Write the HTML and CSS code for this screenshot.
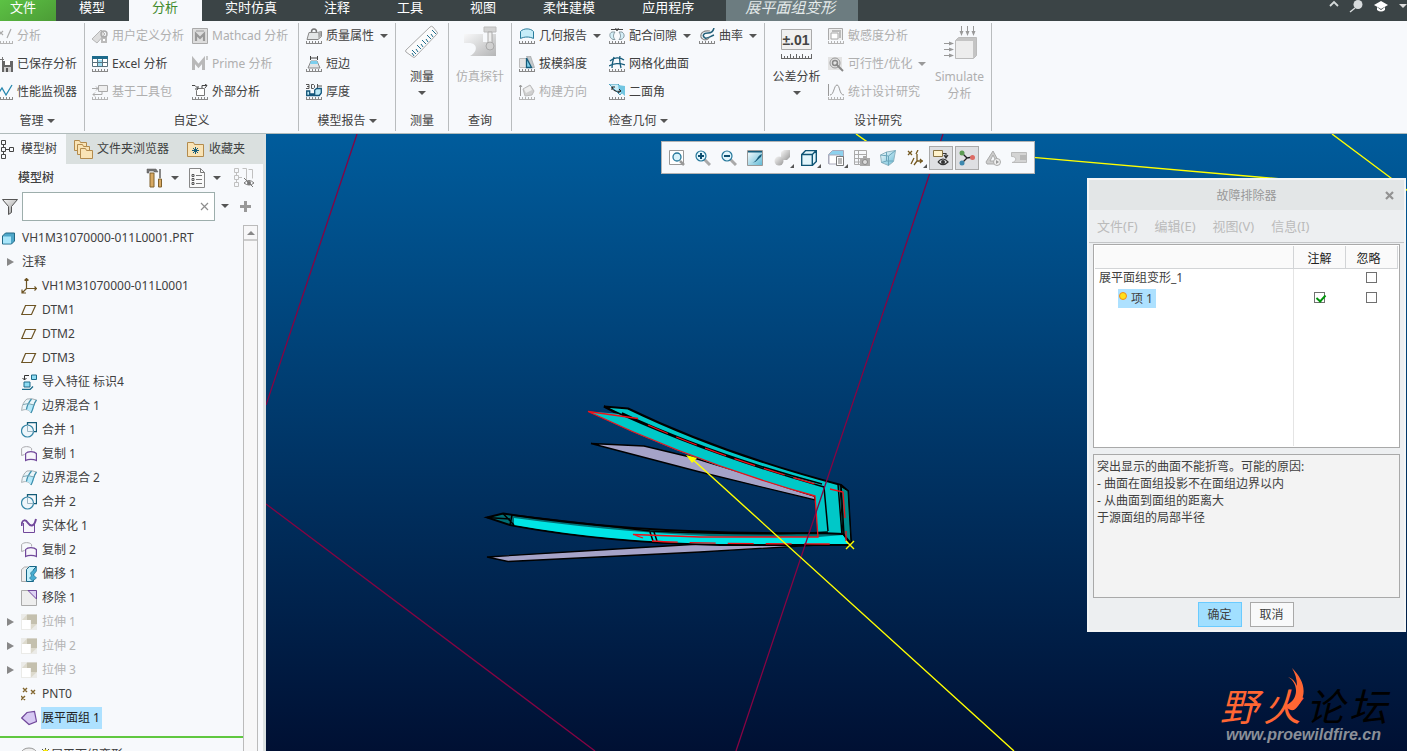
FILE: index.html
```html
<!DOCTYPE html>
<html lang="zh-CN">
  <head>
    <meta charset="UTF-8" />
    <meta name="viewport" content="width=device-width, initial-scale=1.0" />
    <title>展平面组变形</title>
    <link rel="stylesheet" href="styles.css">
  </head>
  <body>
    <!-- shared icons -->
    <svg class="sprite" aria-hidden="true">
      <linearGradient id="metal" x1="0" y1="0" x2="1" y2="1">
        <stop offset="0" stop-color="#f8f8f8" />
        <stop offset="1" stop-color="#989898" />
      </linearGradient>
      <linearGradient id="ice" x1="0" y1="0" x2="1" y2="1">
        <stop offset="0" stop-color="#ffffff" />
        <stop offset="1" stop-color="#5eb9d6" />
      </linearGradient>
      <symbol id="scale" viewBox="0 0 16 16">
        <path d="M0 15.5h16M.5 13v2M3.5 13v2M6.5 13v2M9.5 13v2M12.5 13v2M15.5 13v2" fill="none" stroke="currentColor" />
      </symbol>
      <symbol id="plane" viewBox="0 0 16 16">
        <path d="M4.5 3.5h10l-4 9H.8z" fill="none" stroke="#6d5424" stroke-width="1.2" />
      </symbol>
      <symbol id="blend" viewBox="0 0 16 16">
        <path d="M.6 12.5C1 7 3 3 6 1q5-1 9.500 1C12 6 13 10 10 15 8 11 4 11 .6 12.500z" fill="#eaf5f9" stroke="#a8b0b4" />
        <path d="M8 6.500l5.500.5C12.500 10 12 13 10 15 9 13 7.500 12 5.500 11.700 6 9.500 7 8 8 6.500z" fill="#b5e9fa" />
        <path d="M15.500 2C12 6 13 10 10 15M5.500 11.500C6 7 8 4 10.500 1" fill="none" stroke="#3b8fad" stroke-width="1.200" />
        <path d="M2 6.500q5-2 11 .5" fill="none" stroke="#7aa5b3" />
      </symbol>
      <symbol id="merge" viewBox="0 0 16 16">
        <path d="M6.500 5V.7h9v9H12" fill="none" stroke="#145c78" stroke-width="1.3" />
        <circle cx="6.500" cy="9" r="6" fill="#eef6fb" stroke="#3486a7" stroke-width="1.2" />
        <path d="M6.500 3v6.500h6" fill="none" stroke="#9ab4c2" />
      </symbol>
      <symbol id="copy" viewBox="0 0 16 16">
        <path d="M.6 9.500V2.500c2-2.500 8-2.500 10 0v2M.6 9.500l3-1" fill="none" stroke="#a9a9ad" />
        <path d="M4.600 14.500V7.500c2-2.600 8.500-2.600 10.800 0v7c-3-1.600-8-1.600-10.800 0z" fill="#f7f5fb" stroke="#71489b" stroke-width="1.2" />
      </symbol>
      <symbol id="extrude" viewBox="0 0 16 16">
        <path d="M0 0h16v16H0z" fill="#ebebe8" />
        <path d="M6 .5h10V10h-6V6H6z" fill="#c4c0ae" />
        <path d="M1 6l5-5.500V6zM10 15.500V10h6z" fill="#dddacd" />
        <path d="M1 6h8.500v9H1z" fill="#fff" />
      </symbol>
    </svg>

    <nav class="tabs">
      <button class="tab file">文件</button>
      <button class="tab">模型</button>
      <button class="tab active">分析</button>
      <button class="tab">实时仿真</button>
      <button class="tab">注释</button>
      <button class="tab">工具</button>
      <button class="tab">视图</button>
      <button class="tab">柔性建模</button>
      <button class="tab">应用程序</button>
      <button class="tab context">展平面组变形</button>
      <div class="window-tools">
        <svg width="12" height="12" viewBox="0 0 12 12"><path d="M2 6l4-4 4 4" fill="none" stroke="#d5dada" stroke-width="1.800" /></svg>
        <svg width="16" height="14" viewBox="0 0 16 14"><circle cx="9" cy="4.500" r="4.500" fill="#d8dcdd" /><path d="M6 8l-5 4" stroke="#d8dcdd" stroke-width="1.500" /></svg>
        <svg width="16" height="14" viewBox="0 0 16 14"><path d="M0 5l7-4 7 4-7 4z" fill="#fff" /><path d="M3 7v3q4 3 8 0V7L7 10z" fill="#fff" /></svg>
        <i class="caret light"></i>
      </div>
    </nav>

    <header class="ribbon">
      <section class="group manage">
        <div class="cmds">
          <button class="cmd" disabled><svg class="icon" viewBox="0 0 16 16"><use href="#scale" /><path d="M2 3l4 4M6 3L2 7M14 1l-4 9" stroke="#aaa" stroke-width="1.200" /></svg>分析</button>
          <button class="cmd"><svg class="icon" viewBox="0 0 16 16"><path d="M0 3.500h7M2.500 1v6M5.500 1v4" stroke="#777" fill="none" /><path d="M5 5h11v11H5z" fill="#666" /><path d="M8 5h5v4H8z" fill="#fff" /><path d="M7 11h7v5H7z" fill="#ccc" /><path d="M9 12h2v4H9z" fill="#555" /></svg>已保存分析</button>
          <button class="cmd"><svg class="icon" viewBox="0 0 16 16"><use href="#scale" /><path d="M1 10l4-6 4 7 6-10" fill="none" stroke="#2586ae" stroke-width="1.300" /></svg>性能监视器</button>
        </div>
        <button class="label">管理<i class="caret"></i></button>
      </section>

      <section class="group custom">
        <div class="cmds">
          <button class="cmd" disabled><svg class="icon" viewBox="0 0 16 16"><path d="M0 11L9 2l4 4-8 9z" fill="#ddd" stroke="#b5b5b5" /><path d="M9 8h6v7H9z" fill="#bbb" /><circle cx="12" cy="6" r="3" fill="none" stroke="#aaa" stroke-width="1.500" /><path d="M11 11h2v2h-2z" fill="#fff" /></svg>用户定义分析</button>
          <button class="cmd" disabled><svg class="icon" viewBox="0 0 16 16"><path d="M.5.500h15v15H.5z" fill="#ddd" stroke="#aaa" /><path d="M4 13V6l4 4 4-4v7" fill="none" stroke="#999" stroke-width="2.200" /><path d="M4 3h8" stroke="#bbb" stroke-width="2" /></svg>Mathcad 分析</button>
          <button class="cmd"><svg class="icon" viewBox="0 0 16 16"><use href="#scale" /><path d="M.5.500h15v10H.5z" fill="#fff" stroke="#59727e" /><path d="M0 0h16v3H0z" fill="#1d6b8c" /><path d="M6 4h5v6H6z" fill="#9fdcf0" /><path d="M0 6.500h16M5.500 3v8M10.500 3v8" stroke="#59727e" /></svg>Excel 分析</button>
          <button class="cmd" disabled><svg class="icon" viewBox="0 0 16 16"><path d="M1.500 14V4L6.500 10l5-6v10" fill="none" stroke="#b9b9b9" stroke-width="3" /><path d="M15 0v4" stroke="#b9b9b9" stroke-width="1.500" /></svg>Prime 分析</button>
          <button class="cmd" disabled><svg class="icon" viewBox="0 0 16 16"><use href="#scale" /><path d="M6.500 1.500h9v6h-9z" fill="#eee" stroke="#aaa" /><path d="M0 4.500h6M4 2.500l2 2-2 2M10 8v2.500H1M3 8.500l-2 2 2 2" fill="none" stroke="#aaa" /></svg>基于工具包</button>
          <button class="cmd"><svg class="icon" viewBox="0 0 16 16"><use href="#scale" /><path d="M4.500 6.500l2-2h6v7h-8z" fill="#fff" stroke="#777" /><path d="M0 1.500h3l3 3M6 2v3H3M10 4V1.500h5M13 0l2 1.500L13 4" fill="none" stroke="#444" /></svg>外部分析</button>
        </div>
        <span class="label">自定义</span>
      </section>

      <section class="group report">
        <div class="cmds">
          <button class="cmd"><svg class="icon" viewBox="0 0 16 16"><use href="#scale" /><path d="M1 11.500L3 4.500h8.500l4-1v5l-3.500 3z" fill="#e4e6e7" stroke="#888" /><path d="M12 5l3-1v4l-2.500 3z" fill="#aaa" /><path d="M5.500 4c0-4 5-4 5 0" fill="none" stroke="#777" stroke-width="1.500" /></svg>质量属性<i class="caret"></i></button>
          <button class="cmd"><svg class="icon" viewBox="0 0 16 16"><use href="#scale" /><path d="M4.500 2h7M4.500 0v4M11.500 0v4" stroke="#444" /><path d="M5 5h6l3 7H2z" fill="#e2e5e7" stroke="#888" /><path d="M5 5h6l1 3H4z" fill="#7ccfee" /></svg>短边</button>
          <button class="cmd"><svg class="icon" viewBox="0 0 16 16"><use href="#scale" /><path d="M.7 7h3v3h5V6l2-1.500h4.600V9l-2 2.500H.7z" fill="#bce8f5" stroke="#14567a" stroke-width="1.300" /><path d="M0 .5h3v4H0M1 2.500h2M5.500.500v4h2l1-1V1.500l-1-1zM11.500 0v4M12 2h4" fill="none" stroke="#444" stroke-width=".9" /></svg>厚度</button>
        </div>
        <button class="label">模型报告<i class="caret"></i></button>
      </section>

      <section class="group measure">
        <button class="big">
          <svg width="36" height="36" viewBox="0 0 36 36"><path d="M2 25L26 2q1.500-1.500 3 0l4 5q1 1 0 2L11 32q-1 1-2 0l-7-5q-1-1 0-2z" fill="#fbfbfb" stroke="#aaa" /><path d="M10 31l-2-3M12 29l-4-4M14 27l-2-3M17 24l-4-4M19 22l-2-3M22 19l-4-4M24 17l-2-3M27 14l-4-4M29 12l-2-3M32 9l-4-4" stroke="#1d6b8c" /></svg>
          <span>测量</span><i class="caret"></i>
        </button>
        <span class="label">测量</span>
      </section>

      <section class="group query">
        <button class="big" disabled>
          <svg width="36" height="36" viewBox="0 0 36 36"><path d="M2 9h19v8h5V9h8v22H8c8-4 8-13-1-13H2z" fill="url(#metal)" opacity=".7" /><path d="M22 2h12v5H22z" fill="#d2d2d2" stroke="#bbb" /><path d="M26 7h4v11h-4z" fill="#eee" stroke="#aaa" /><circle cx="28" cy="21" r="4" fill="#d0d0d0" stroke="#aaa" /></svg>
          <span>仿真探针</span>
        </button>
        <span class="label">查询</span>
      </section>

      <section class="group geometry">
        <div class="cmds">
          <button class="cmd"><svg class="icon" viewBox="0 0 16 16"><use href="#scale" /><path d="M1.500 10.500v-7c3-3.500 10-3.500 13 0v7c-4-2-9-2-13 0z" fill="#c5ecf8" stroke="#2a7c9c" /></svg>几何报告<i class="caret"></i></button>
          <button class="cmd"><svg class="icon" viewBox="0 0 16 16"><use href="#scale" /><path d="M6 4H3C0 5 0 10 4 11.500h2c-2-2-2-5 0-7.500zM10 4h3c3 2 3 6-1 7.500h-2c2-2 2-5 0-7.500z" fill="#d4eff8" stroke="#889ba3" /><path d="M2 1.500h12M6.500 0l2 3M9.500 0l-2 3" stroke="#444" /></svg>配合间隙<i class="caret"></i></button>
          <button class="cmd"><svg class="icon" viewBox="0 0 16 16"><use href="#scale" /><path d="M15 0c-1 4-3 5-6 5-5 0-6 3-3 5 3 1 6-2 9-3" fill="none" stroke="#225f79" stroke-width="1.500" /><path d="M11 3c-6-1-10 2-9 6 1 3 5 4 8 1" fill="none" stroke="#888" stroke-width="1.200" /></svg>曲率<i class="caret"></i></button>
          <button class="cmd"><svg class="icon" viewBox="0 0 16 16"><use href="#scale" /><path d="M.5 2.500h7v9h-7z" fill="#e4e4e4" stroke="#bbb" /><path d="M7.500 0h4l4 11.500h-3z" fill="#c3c9cc" stroke="#999" stroke-width=".6" /><path d="M7.500 2v9.500h5z" fill="#82d2ed" stroke="#155b7a" stroke-width="1.300" /></svg>拔模斜度</button>
          <button class="cmd wide"><svg class="icon" viewBox="0 0 16 16"><use href="#scale" /><path d="M1 5c4-4 10-4 14-1M0 10c4-3 11-3 16-1M5 1c-1 3-2 7-2 11M11 0c-1 4 0 8 1 12" fill="none" stroke="#155b7a" stroke-width="1.300" /></svg>网格化曲面</button>
          <button class="cmd" disabled><svg class="icon" viewBox="0 0 16 16"><use href="#scale" /><path d="M1.500 12V1M0 3l1.500-2L3 3" fill="none" stroke="#999" /><path d="M4 5l7-4 4 6-2 4-7 1z" fill="#d0d0d0" stroke="#bbb" /><path d="M5 5l6-3 2 4-6 3z" fill="#eee" /></svg>构建方向</button>
          <button class="cmd wide"><svg class="icon" viewBox="0 0 16 16"><use href="#scale" /><path d="M0 0h9l6 6-4 5z" fill="#ccedf7" stroke="#47a0bf" /><path d="M9 1l7 1v10l-6-5z" fill="#72c6e2" /><path d="M3 3c1 4 4 5 9 4M3 6V3h3M10 5l2 2-3 2" fill="none" stroke="#222" /></svg>二面角</button>
        </div>
        <button class="label">检查几何<i class="caret"></i></button>
      </section>

      <section class="group study">
        <div class="study-body">
          <button class="big">
            <svg width="36" height="36" viewBox="0 0 36 36"><path d="M2.500 4.500h30v20h-30z" fill="#f0f0f0" stroke="#aaa" /><text x="17" y="20" class="tol">±.01</text><path d="M2 33.500h31M2.500 29v4M5.500 31v2M8.500 31v2M11.500 29v4M14.500 31v2M17.500 29v4M20.500 31v2M23.500 29v4M26.500 31v2M29.500 31v2M32.500 29v4" stroke="#666" fill="none" /></svg>
            <span>公差分析</span><i class="caret"></i>
          </button>
          <div class="cmds">
            <button class="cmd" disabled><svg class="icon" viewBox="0 0 16 16"><use href="#scale" /><path d="M.5 12V.500h14V12" fill="#eee" stroke="#aaa" /><path d="M3 5h7v6H3z" fill="#fff" stroke="#aaa" /><path d="M4 3h8v7" fill="none" stroke="#bbb" stroke-width="2" /></svg>敏感度分析</button>
            <button class="cmd" disabled><svg class="icon" viewBox="0 0 16 16"><path d="M0 1h14v13H0z" fill="#e3e3e3" /><circle cx="7" cy="7" r="5" fill="none" stroke="#999" /><circle cx="7" cy="7" r="2.500" fill="none" stroke="#888" stroke-width="1.500" /><path d="M8 8l7 7" stroke="#888" stroke-width="2" /></svg>可行性/优化<i class="caret"></i></button>
            <button class="cmd" disabled><svg class="icon" viewBox="0 0 16 16"><use href="#scale" /><path d="M.5 0v12M2 11c4 0 4-10 7-10s2 10 7 10" fill="none" stroke="#999" /></svg>统计设计研究</button>
          </div>
          <button class="big" disabled>
            <svg width="36" height="36" viewBox="0 0 36 36"><path d="M13.500 15.500l3-3h18v18l-3 3h-18z" fill="#c4c4c4" stroke="#bbb" /><path d="M14 16h17v17H14z" fill="#ededed" /><path d="M19.500 1v9M25.500 1v9M31.500 1v9M2 18.500h9M2 24.500h9M2 30.500h9" stroke="#999" /><path d="M17.500 6h4l-2 5zM23.500 6h4l-2 5zM29.500 6h4l-2 5zM7 16.500v4l5-2zM7 22.500v4l5-2zM7 28.500v4l5-2z" fill="#999" /></svg>
            <span>Simulate<br>分析</span>
          </button>
        </div>
        <span class="label">设计研究</span>
      </section>
    </header>

    <main class="workspace">
      <aside class="sidebar">
        <div class="side-tabs">
          <button class="side-tab active"><svg width="15" height="20" viewBox="0 0 15 20"><path d="M1.500 1.500h4v4h-4zM1.500 8.500h4v4h-4zM1.500 15.500h4v4h-4zM9.500 8.500h4v4h-4zM3.500 6v2M3.500 13v2M6 10.500h3" fill="none" stroke="#444" /></svg>模型树</button>
          <button class="side-tab"><svg width="19" height="20" viewBox="0 0 19 20"><g fill="#f9e3b5" stroke="#b38b4d"><path d="M.5 1.500h5l1 2h6v8H.5z" /><path d="M3.500 5.500h5l1 2h6v8h-12z" /><path d="M6.500 9.500h5l1 2h6v8h-12z" /></g></svg>文件夹浏览器</button>
          <button class="side-tab fav"><svg width="17" height="16" viewBox="0 0 17 16"><path d="M.5 1.500h6l1 2h9v12H.5z" fill="#f9e3b5" stroke="#b38b4d" /><path d="M8.500 6v7M5 9.500h7M6 7l5 5M11 7l-5 5" stroke="#155b7a" /></svg>收藏夹</button>
        </div>
        <div class="side-main">
          <div class="tree-head">
            <h2>模型树</h2>
            <button class="tool" aria-label="设置"><svg width="18" height="20" viewBox="0 0 18 20"><path d="M1 1h9l2 3H8V3H3v2H1z" fill="#777" stroke="#555" stroke-width=".5" /><path d="M4 5h4v14H4z" fill="#d8a963" stroke="#80622e" /><path d="M14 1v9" stroke="#888" stroke-width="2" /><path d="M12.500 11h3v8h-3z" fill="#d8a963" stroke="#80622e" /></svg><i class="caret"></i></button>
            <button class="tool" aria-label="显示"><svg width="17" height="20" viewBox="0 0 17 20"><path d="M.5.500h11l4 4v15H.5z" fill="#fafafa" stroke="#888" /><path d="M11.500.500v4h4M7 7.500h6M7 11.500h6M7 15.500h6" fill="none" stroke="#777" /><path d="M3 6.500h2v2H3zM3 10.500h2v2H3zM3 14.500h2v2H3z" fill="none" stroke="#555" /></svg><i class="caret"></i></button>
            <button class="tool" aria-label="隐藏"><svg width="20" height="20" viewBox="0 0 20 20"><path d="M.5.500h4v4h-4zM.5 7.500h4v4h-4zM.5 14.500h4v4h-4zM2.500 5v2M2.500 12v2M5 9.500h3M8.500.500h4v12M14.500 1.500h4v9" fill="none" stroke="#c0c0c0" /><path d="M10 15q5-5 10 0-5 4-10 0" fill="none" stroke="#777" /><circle cx="15" cy="15" r="2" fill="#777" /><path d="M10 10l9 9" stroke="#777" /></svg></button>
          </div>
          <div class="filter">
            <svg width="17" height="17" viewBox="0 0 17 17"><path d="M1.500 1.500h15l-6 7v6l-3 2v-8z" fill="url(#metal)" stroke="#555" /></svg>
            <div class="search"><input type="text" aria-label="过滤"><button aria-label="清除"><svg width="9" height="9" viewBox="0 0 9 9"><path d="M1 1l7 7M8 1L1 8" stroke="#8d8d8d" stroke-width="1.200" /></svg></button></div>
            <button class="tool" aria-label="选项"><i class="caret"></i></button>
            <button class="tool" aria-label="添加"><svg width="11" height="11" viewBox="0 0 11 11"><path d="M5.500 0v11M0 5.500h11" stroke="#999" stroke-width="3" /></svg></button>
          </div>
          <div class="tree-wrap">
            <ul class="tree">
              <li class="top"><svg class="icon" viewBox="0 0 16 16"><path d="M1.500 6l3-3h9v8l-3 3h-9z" fill="#4ea7c9" stroke="#236985" /><path d="M2 6.500h8v7H2z" fill="#a9e6fa" /></svg><span>VH1M31070000-011L0001.PRT</span></li>
              <li class="top"><i class="toggle"></i><span>注释</span></li>
              <li><svg class="icon" viewBox="0 0 16 16"><path d="M5.500 0v10.500H16M5.500 10.500L1 15M3.500 2.500l2-2 2 2M13.500 8.500l2 2-2 2M1 11.500V15h4" fill="none" stroke="#6d5424" stroke-width="1.200" /></svg><span>VH1M31070000-011L0001</span></li>
              <li><svg class="icon"><use href="#plane" /></svg><span>DTM1</span></li>
              <li><svg class="icon"><use href="#plane" /></svg><span>DTM2</span></li>
              <li><svg class="icon"><use href="#plane" /></svg><span>DTM3</span></li>
              <li><svg class="icon" viewBox="0 0 16 16"><path d="M10.500 1h5v4.500h-5zM3 8h6v5H3z" fill="#8fdcf3" stroke="#1c6b8a" /><path d="M1 15.500h8l3-3" fill="none" stroke="#1c6b8a" stroke-width="1.300" /><path d="M8 1.500H3.500V6M1.500 4l2 2 2-2" fill="none" stroke="#333" /></svg><span>导入特征 标识4</span></li>
              <li><svg class="icon"><use href="#blend" /></svg><span>边界混合 1</span></li>
              <li><svg class="icon"><use href="#merge" /></svg><span>合并 1</span></li>
              <li><svg class="icon"><use href="#copy" /></svg><span>复制 1</span></li>
              <li><svg class="icon"><use href="#blend" /></svg><span>边界混合 2</span></li>
              <li><svg class="icon"><use href="#merge" /></svg><span>合并 2</span></li>
              <li><svg class="icon" viewBox="0 0 16 16"><path d="M2.500 5v9.500h11V5" fill="#f7f5fb" stroke="#71489b" /><path d="M.5 8C1 0 5 2 7 5s6 5 8-4" fill="none" stroke="#71489b" stroke-width="2" /></svg><span>实体化 1</span></li>
              <li><svg class="icon"><use href="#copy" /></svg><span>复制 2</span></li>
              <li><svg class="icon" viewBox="0 0 16 16"><path d="M.5 3.500l3-2.500h5l-3 2.500v12h-5z" fill="#eee" stroke="#aaa" /><path d="M5.500 3.500l3-3h7l-3 3v12h-7z" fill="#c4f0fb" stroke="#176687" /><path d="M15.500 1l-6 6 1 3-2 2 3 3 4-3-3-3 3-4z" fill="#48acd0" stroke="#176687" stroke-width=".6" /></svg><span>偏移 1</span></li>
              <li><svg class="icon" viewBox="0 0 16 16"><path d="M.5.500h15v15H.5z" fill="#eee" stroke="#aaa" /><path d="M7 .5h8.500V9z" fill="#ddd2f3" stroke="#71489b" /></svg><span>移除 1</span></li>
              <li class="suppressed"><i class="toggle"></i><svg class="icon"><use href="#extrude" /></svg><span>拉伸 1</span></li>
              <li class="suppressed"><i class="toggle"></i><svg class="icon"><use href="#extrude" /></svg><span>拉伸 2</span></li>
              <li class="suppressed"><i class="toggle"></i><svg class="icon"><use href="#extrude" /></svg><span>拉伸 3</span></li>
              <li><svg class="icon" viewBox="0 0 16 16"><path d="M2 2l4 4M6 2L2 6M10 4l4 4M14 4l-4 4M0 10l4 4M4 10l-4 4" stroke="#80642c" stroke-width="1.400" /></svg><span>PNT0</span></li>
              <li class="selected"><svg class="icon" viewBox="0 0 16 16"><path d="M.7 8L6 2.500l7.500-1 2 10L8 14.500z" fill="#d7c9f3" stroke="#71489b" stroke-width="1.200" /></svg><span>展平面组 1</span></li>
              <li class="insert-line"></li>
              <li><svg class="icon" viewBox="0 0 16 16"><ellipse cx="8" cy="6" rx="7.500" ry="5" fill="#eee" stroke="#999" /></svg><svg class="new" viewBox="0 0 9 14"><path d="M4.500 0v9M0 4.500h9M1 1l7 7M8 1L1 8" stroke="#222" stroke-width=".8" /><circle cx="4.500" cy="4.500" r="3" fill="#ffee00" /></svg><span>展平面组变形</span></li>
            </ul>
            <div class="scrollbar"><button aria-label="向上"></button></div>
          </div>
        </div>
      </aside>

      <section class="canvas">
        <svg class="scene" viewBox="266 134 1141 617" preserveAspectRatio="xMinYMin slice">
          <g stroke="#000" stroke-width="1.300">
            <path d="M591 443.500L644 446 690 457 815 495V500L700 472z" fill="#a5a3c8" />
            <path d="M487 557L600 550 700 544H835L700 552 508 561.500z" fill="#a5a3c8" />
            <path d="M604 406.500L628 408.500Q720 453 841 485L848 491 851 543 826 536 815 496Q700 462 622 416z" fill="#00c8c8" stroke-width="2" />
          </g>
          <path d="M588 411.500L622 414Q720 456 825 486L828 532 818 537 815 496Q700 465 588 411.500z" fill="#00c8c8" />
          <path d="M840 486L848 491 851 543 843 535z" fill="#008f8f" stroke="#000" />
          <path d="M487 517.500L503 513.500Q640 535 820 533L843 534 850 545H720Q600 542 510 525z" fill="#006f75" stroke="#000" stroke-width="2" />
          <path d="M514 518Q640 535 740 537H818L843 535 849 544H720Q610 542 514 525z" fill="#00e5e5" />
          <g fill="none" stroke="#000" stroke-width="1.500">
            <path d="M604 406.500Q700 452 824 487L828 531M622 413Q710 454 822 484" />
            <path d="M838 484L842 535M841 485L844 535M828 532Q760 536 650 531L512 515" />
            <path d="M487 517.500L510 519M503 513.500L514 525M512 515L510 525M650 532L653 541M654 532L657 541M843 534L851 543" />
          </g>
          <g fill="none" stroke="#f01018" stroke-width="1.300">
            <path d="M588 411.500Q700 464 815 496L818 537H700L633 534.500 643 538M588 411.500L638 418.500" />
            <path d="M648 425Q720 457 822 486" stroke-dasharray="22 9" />
            <path d="M652 541Q700 544 836 544" stroke-dasharray="26 12" />
            <path d="M830 489L843 492 845 518M846 531V541" />
          </g>
          <path d="M357 134L266 405M943 134L736 751M266 504L595 751" fill="none" stroke="#850443" stroke-width="1.300" />
          <path d="M856 134L869 143 1407 190M1332 134L1407 190M690 457L1014 751M846 541L854 549M854 541L846 549" fill="none" stroke="#ffff00" stroke-width="1.400" />
          <path d="M686 455L697 458 692 463z" fill="#ffff00" />
        </svg>

        <div class="view-bar">
          <button aria-label="重新调整"><svg class="icon" viewBox="0 0 16 16"><path d="M.5.500h14v14H.5z" fill="#fff" stroke="#999" /><path d="M11 11l4 4" stroke="#999" stroke-width="2.500" /><circle cx="8" cy="7" r="4" fill="#d8f2fa" stroke="#25779a" stroke-width="1.300" /></svg></button>
          <button aria-label="放大"><svg class="icon" viewBox="0 0 16 16"><path d="M9 9l6 6" stroke="#a9a9a9" stroke-width="3" /><circle cx="6" cy="6" r="5" fill="#e2f6fd" stroke="#25779a" stroke-width="1.200" /><path d="M6 3v6M3 6h6" stroke="#0d4e70" stroke-width="2" /></svg></button>
          <button aria-label="缩小"><svg class="icon" viewBox="0 0 16 16"><path d="M9 9l6 6" stroke="#a9a9a9" stroke-width="3" /><circle cx="6" cy="6" r="5" fill="#e2f6fd" stroke="#25779a" stroke-width="1.200" /><path d="M3 6h6" stroke="#0d4e70" stroke-width="2" /></svg></button>
          <button aria-label="重画"><svg class="icon" viewBox="0 0 16 16"><path d="M.5.500h15v15H.5z" fill="url(#ice)" stroke="#999" /><path d="M4 13c5 0 6-6 9-8l2-1-1 3c-3 2-5 6-10 6z" fill="#155b7a" /><path d="M1 1h14v1.500H1z" fill="#155b7a" /></svg></button>
          <button class="menu" aria-label="渲染"><svg class="icon" viewBox="0 0 16 16"><path d="M7 2l3-2h6v7l-3 3H7z" fill="url(#metal)" /><circle cx="5" cy="11" r="4.500" fill="url(#metal)" /></svg></button>
          <button class="menu" aria-label="显示样式"><svg class="icon" viewBox="0 0 16 16"><path d="M.7 4.500l4-4h10.600v11l-4 4H.7zM.7 4.500h10.600v11M11.300 4.500l4-4" fill="#e2f5fb" stroke="#0e5474" stroke-width="1.400" /></svg></button>
          <button class="menu" aria-label="已保存方向"><svg class="icon" viewBox="0 0 16 16"><path d="M.5 4.500l4-4h11v10l-3 3H.5z" fill="#8ed1ed" stroke="#aab" /><path d="M1 5h11v9H1z" fill="#fff" stroke="#aab" /><path d="M8.500 6.500h7v9h-7z" fill="#fff" stroke="#777" /><path d="M10 9h4M10 11h4M10 13h4" stroke="#777" /></svg></button>
          <button aria-label="视图管理器" disabled><svg class="icon" viewBox="0 0 16 16"><path d="M.5.500h12v14H.5zM0 4.500h13M0 8.500h8M0 12h7M4.500 1v13" fill="none" stroke="#aaa" /><path d="M6 8h10v8H6z" fill="#aaa" /><path d="M9 6h4v2H9z" fill="#aaa" /><circle cx="11" cy="12" r="2.500" fill="#ddd" stroke="#888" /></svg></button>
          <button aria-label="透视图"><svg class="icon" viewBox="0 0 16 16"><path d="M.5 5l6-3 9-1.500-2 11-5 4-7-3z" fill="url(#ice)" stroke="#90b3bf" /><path d="M.5 5l8 1 7-5.500M8.500 6v9.500M6.500 2v9l-5 1.500M6.500 11h7" stroke="#6aa6bb" fill="none" /></svg></button>
          <button class="menu" aria-label="基准显示"><svg class="icon" viewBox="0 0 16 16"><path d="M1 1l4 4M5 1L1 5M11 0L9 4M7 8l-3 6M10 4v7h6M10 11l-3 4M13 9l2 2-2 2" fill="none" stroke="#755920" stroke-width="1.300" /></svg></button>
          <button class="pressed" aria-label="注释显示"><svg class="icon" viewBox="0 0 16 16"><path d="M.5.500h9v6h-9z" fill="#fff3cc" stroke="#887445" /><path d="M10 3.500h3V8M11 5l2 3 2-3M5 12q5-6 10 0-5 5-10 0" fill="none" stroke="#333" stroke-width="1.200" /><circle cx="10" cy="12" r="2" fill="#333" /></svg></button>
          <button class="pressed" aria-label="旋转中心"><svg class="icon" viewBox="0 0 16 16"><path d="M3 3l5 5 6-1M8 8l-5 5" stroke="#222" fill="none" stroke-width="1.300" /><circle cx="3" cy="3" r="2.500" fill="#5b9a52" /><circle cx="13.500" cy="7.500" r="2.500" fill="#dd6b64" /><circle cx="3" cy="13" r="2.500" fill="#3d88ae" /></svg></button>
          <button aria-label="动画" disabled><svg class="icon" viewBox="0 0 16 16"><path d="M8 1l6 11-2 2H2L1 12z" fill="#ccc" stroke="#aaa" /><path d="M8 5l3 6H5z" fill="#f7f9fc" stroke="#aaa" /><circle cx="12" cy="12" r="3.500" fill="#eee" stroke="#aaa" /><path d="M11 10v4l3-2z" fill="#999" /></svg></button>
          <button aria-label="仿真" disabled><svg class="icon" viewBox="0 0 16 16"><path d="M.5 2.500h15v10H1c5-1 5-6 0-6H.5z" fill="#d4d4d4" stroke="#bbb" /><path d="M9 5h7v5H9z" fill="#b8b8b8" /></svg></button>
        </div>

        <form class="dialog">
          <header class="dialog-title">故障排除器<button type="button" aria-label="关闭"><svg width="9" height="9" viewBox="0 0 9 9"><path d="M1 1l7 7M8 1L1 8" stroke="#929292" stroke-width="2.200" /></svg></button></header>
          <nav class="dialog-menu">
            <button type="button" disabled>文件(F)</button>
            <button type="button" disabled>编辑(E)</button>
            <button type="button" disabled>视图(V)</button>
            <button type="button" disabled>信息(I)</button>
          </nav>
          <div class="list">
            <table>
              <thead><tr><th></th><th id="note">注解</th><th id="skip">忽略</th></tr></thead>
              <tbody>
                <tr><td>展平面组变形_1</td><td></td><td><input type="checkbox" aria-labelledby="skip"></td></tr>
                <tr><td class="child"><span class="item"><i class="dot"></i>项 1</span></td><td><input type="checkbox" aria-labelledby="note" checked></td><td><input type="checkbox" aria-labelledby="skip"></td></tr>
                <tr class="rest"><td></td><td></td><td></td></tr>
              </tbody>
            </table>
          </div>
          <div class="message">
            <p>突出显示的曲面不能折弯。可能的原因:</p>
            <p>- 曲面在面组投影不在面组边界以内</p>
            <p>- 从曲面到面组的距离大</p>
            <p>于源面组的局部半径</p>
          </div>
          <footer class="actions">
            <button type="button" class="ok">确定</button>
            <button type="button">取消</button>
          </footer>
        </form>

        <div class="watermark">
          <div class="brand"><span class="fire">野</span><span class="fire">火</span><span>论</span><span>坛</span></div>
          <svg class="flame" width="20" height="44" viewBox="0 0 20 44"><path d="M7 0C20 13 24 28 9 42 4 43 1 39 1 37 14 32 14 15 3 9c4 1 7 4 9 9C12 11 10 5 7 0z" fill="#ff6633" /></svg>
          <div class="site">www.proewildfire.cn</div>
        </div>
      </section>
    </main>
  </body>
</html>
```
FILE: styles.css
```css
* {
  box-sizing: border-box;
}

body {
  display: flex;
  flex-direction: column;
  height: 100vh;
  margin: 0;
  overflow: hidden;
  background: #f7f9fc;
  color: #404040;
  font: 12px/16px "Noto Sans", "Noto Sans CJK SC", sans-serif;
}

button {
  display: flex;
  align-items: center;
  margin: 0;
  padding: 0;
  border: 0;
  background: none;
  color: inherit;
  font: inherit;
  white-space: nowrap;
}

svg {
  flex: none;
  display: block;
}

.sprite {
  position: absolute;
  width: 0;
  height: 0;
}

.icon {
  width: 16px;
  height: 16px;
  color: #888;
}

.caret {
  flex: none;
  border: 4px solid transparent;
  border-top-color: #555;
  border-bottom: 0;
}

.caret.light {
  border-top-color: #ddd;
}

/* tabs */
.tabs {
  flex: none;
  display: flex;
  height: 21px;
  background: #3b4446;
  color: #fff;
  font-size: 13px;
}

.tab {
  padding: 0 24px 7px 23px;
}

.tab.file {
  padding: 0 20px 7px 10px;
  background: linear-gradient(150deg, #5cc244, #4c9c36);
}

.tab.active {
  background: #f7f9fc;
  color: #3f8a2b;
}

.tab.context {
  margin-left: 8px;
  padding: 0 23px 7px 19px;
  background: #6c7c80;
  color: #e4eaea;
  font-size: 15px;
  font-style: italic;
}

.window-tools {
  display: flex;
  align-items: flex-start;
  gap: 9px;
  margin-left: auto;
}

.window-tools .caret {
  margin-top: 4px;
}

/* ribbon */
.ribbon {
  flex: none;
  display: flex;
  height: 113px;
  border-bottom: 1px solid #b0bbbb;
}

.group {
  flex: none;
  display: flex;
  flex-direction: column;
  height: 108px;
  margin-top: 2px;
  border-right: 1px solid #b9bcbe;
}

.cmds {
  display: grid;
  grid-auto-rows: 28px;
  height: 84px;
  margin-top: -1px;
}

.cmd {
  gap: 4px;
}

.cmd .caret {
  margin-left: 2px;
}

.cmd:disabled,
.big:disabled {
  color: #afafaf;
}

.cmd:disabled .icon {
  color: #b5b5b5;
}

.cmd:disabled .caret {
  border-top-color: #999;
}

.label {
  display: flex;
  flex: none;
  align-items: center;
  justify-content: center;
  gap: 3px;
  height: 30px;
}

.big {
  flex: none;
  flex-direction: column;
  align-self: center;
  height: 83px;
  padding-top: 2px;
}

.big span {
  margin-top: 7px;
  line-height: 17px;
}

.big .caret {
  margin-top: 6px;
}

.manage {
  width: 85px;
}

.manage .cmds {
  margin-left: -3px;
}

.manage .label {
  padding-right: 10px;
}

.custom {
  width: 214px;
}

.custom .cmds {
  grid-template-columns: 100px auto;
  padding-left: 7px;
}

.report {
  width: 97px;
}

.report .cmds {
  padding-left: 7px;
}

.measure {
  width: 53px;
}

.query {
  width: 63px;
}

.geometry {
  width: 253px;
}

.geometry .cmds {
  grid-template-columns: 90px 90px auto;
  padding-left: 7px;
}

.geometry .wide {
  grid-column: span 2;
}

.study {
  width: 227px;
}

.study-body {
  display: flex;
  height: 83px;
}

.study-body .cmds {
  flex: 1;
}

.study-body .big {
  width: 63px;
}

.tol {
  fill: #444;
  font: bold 14px "Liberation Sans", sans-serif;
  text-anchor: middle;
}

/* sidebar */
.workspace {
  flex: 1;
  display: flex;
  min-height: 0;
}

.sidebar {
  flex: none;
  display: flex;
  flex-direction: column;
  width: 266px;
  border-right: 3px solid #dbe1e1;
}

.side-tabs {
  flex: none;
  display: flex;
  height: 30px;
  background: #dae0df;
}

.side-tab {
  gap: 4px;
  padding: 0 8px;
}

.side-tab.active {
  width: 66px;
  gap: 6px;
  padding: 0;
  background: #f7f9fc;
}

.side-tab.fav {
  gap: 5px;
  padding-left: 10px;
}

.side-main {
  flex: 1;
  display: flex;
  flex-direction: column;
  min-height: 0;
}

.tree-head {
  flex: none;
  display: flex;
  align-items: center;
  gap: 10px;
  height: 27px;
  padding: 0 9px 0 18px;
}

.tree-head h2 {
  flex: 1;
  margin: 0;
  font-size: 12px;
  font-weight: 500;
}

.tree-head .tool:last-child {
  margin-left: 3px;
}

.tool {
  gap: 7px;
}

.filter {
  flex: none;
  display: flex;
  align-items: center;
  gap: 4px;
  height: 30px;
  padding: 0 12px 0 1px;
}

.filter .tool {
  margin-left: 2px;
}

.filter .tool + .tool {
  margin-left: 7px;
}

.search {
  flex: 1;
  display: flex;
  min-width: 0;
  height: 29px;
  border: 1px solid #9daeac;
  background: #fff;
}

.search input {
  flex: 1;
  min-width: 0;
  border: 0;
  background: none;
  font: inherit;
}

.search button {
  padding: 0 5px;
}

.tree-wrap {
  flex: 1;
  display: flex;
  min-height: 0;
  margin-top: 4px;
}

.tree {
  flex: 1;
  margin: 0;
  padding: 1px 0 0;
  overflow: hidden;
  list-style: none;
}

.tree li {
  display: flex;
  align-items: center;
  position: relative;
  height: 24px;
  padding-left: 21px;
}

.tree span {
  padding: 3px 2px 3px 1px;
}

.tree .icon {
  margin-right: 4px;
}

.tree .top {
  padding-left: 1px;
}

.tree .toggle {
  position: absolute;
  left: 7px;
  border: 4px solid transparent;
  border-left: 7px solid #888;
  border-right: 0;
}

.tree .toggle + span {
  margin-left: 20px;
}

.tree .suppressed {
  color: #b4b4b4;
}

.tree .selected span {
  background: #ade1ff;
  color: #222;
}

.tree .insert-line {
  height: 2px;
  margin: 6px 0 5px;
  background: #60c840;
}

.tree .new {
  width: 9px;
  height: 14px;
}

.scrollbar {
  width: 15px;
  margin-right: 5px;
  border: 1px solid #bbb;
  border-bottom: 0;
  background: #f7f7f8;
}

.scrollbar button {
  justify-content: center;
  width: 100%;
  height: 15px;
  border-bottom: 2px solid #ccc;
}

.scrollbar button::before {
  content: "";
  border: 4px solid transparent;
  border-bottom-color: #888;
  border-top: 0;
}

/* graphics area */
.canvas {
  flex: 1;
  position: relative;
  overflow: hidden;
  background: linear-gradient(#005c9c, #001033);
}

.scene {
  width: 100%;
  height: 100%;
}

.view-bar {
  position: absolute;
  top: 7px;
  left: 395px;
  display: flex;
  align-items: center;
  gap: 2px;
  height: 33px;
  padding: 0 3px;
  border: 1px solid #b3b3b3;
  background: #f7f9fc;
}

.view-bar button {
  position: relative;
  justify-content: center;
  width: 24px;
  height: 24px;
}

.view-bar .menu {
  width: 25px;
}

.view-bar .menu::after {
  content: "";
  position: absolute;
  right: 0;
  bottom: 2px;
  border: 2px solid transparent;
  border-right-color: #555;
  border-bottom-color: #555;
}

.view-bar .pressed {
  border: 1px solid #aaa;
  background: #dedfe2;
}

/* dialog */
.dialog {
  position: absolute;
  top: 44px;
  right: 1px;
  width: 319px;
  height: 454px;
  display: flex;
  flex-direction: column;
  border: 2px solid #f3f5f6;
  background: #edeff1;
}

.dialog-title {
  flex: none;
  display: flex;
  align-items: center;
  justify-content: center;
  position: relative;
  height: 30px;
  padding-top: 1px;
  background: #e3e6e7;
  color: #999;
}

.dialog-title button {
  position: absolute;
  right: 10px;
}

.dialog-menu {
  flex: none;
  display: flex;
  gap: 17px;
  height: 33px;
  padding: 0 8px;
  border-bottom: 1px solid #c4c6c8;
  color: #bbb;
  font-size: 13px;
}

.list {
  flex: none;
  height: 204px;
  margin: 1px 4px 6px;
  padding: 1px;
  border: 1px solid #a9a9a9;
  background: #fff;
}

.list table {
  width: 100%;
  height: 100%;
  border-collapse: collapse;
  table-layout: fixed;
}

.list th {
  height: 22px;
  padding: 4px 0 0;
  border-right: 1px solid #d2d4d6;
  border-bottom: 1px solid #d2d4d6;
  background: #fafafa;
  color: #222;
  font-weight: normal;
}

.list th + th {
  width: 52px;
}

.list th:last-child {
  padding-right: 6px;
}

.list td {
  height: 20px;
  padding: 0;
  text-align: center;
}

.list td:first-child {
  padding-left: 4px;
  border-right: 1px solid #e4e4e4;
  text-align: left;
}

.list td.child {
  padding-left: 23px;
}

.list .rest td {
  height: auto;
}

.item {
  display: inline-flex;
  align-items: center;
  gap: 3px;
  height: 19px;
  padding-right: 3px;
  background: #ade1ff;
}

.dot {
  width: 8px;
  height: 8px;
  margin: 0 1px 5px;
  border: 1px solid #f08c1a;
  border-radius: 50%;
  background: #ffe01b;
}

.list input {
  appearance: none;
  display: block;
  width: 11px;
  height: 11px;
  margin: 0 auto 2px;
  border: 1px solid #707070;
  background: #fff;
}

.list input:checked::before {
  content: "";
  display: block;
  width: 4px;
  height: 7px;
  margin: 0 0 0 3px;
  border: solid #00930b;
  border-width: 0 2px 2px 0;
  transform: rotate(42deg);
}

.message {
  flex: none;
  height: 144px;
  margin: 0 4px;
  padding: 3px;
  border: 1px solid #a9a9a9;
  background: #f3f3f3;
  line-height: 17px;
}

.message p {
  margin: 0;
}

.actions {
  display: flex;
  justify-content: center;
  gap: 8px;
  padding: 4px 2px 0 0;
}

.actions button {
  justify-content: center;
  width: 44px;
  height: 25px;
  border: 1px solid #a9a9a9;
  background: #f8f9fa;
}

.actions .ok {
  border-color: #6acbff;
  background: #a1dfff;
}

/* forum mark */
.watermark {
  position: absolute;
  right: 20px;
  bottom: 7px;
}

.brand {
  display: flex;
  gap: 5px;
  color: #000;
  font-size: 38px;
  font-style: italic;
  font-weight: 400;
  line-height: 40px;
}

.brand .fire {
  color: #ff6633;
}

.flame {
  position: absolute;
  top: -18px;
  left: 65px;
}

.site {
  color: #8a8f98;
  font: italic bold 16px/18px "Liberation Sans", sans-serif;
  text-align: center;
}
```
